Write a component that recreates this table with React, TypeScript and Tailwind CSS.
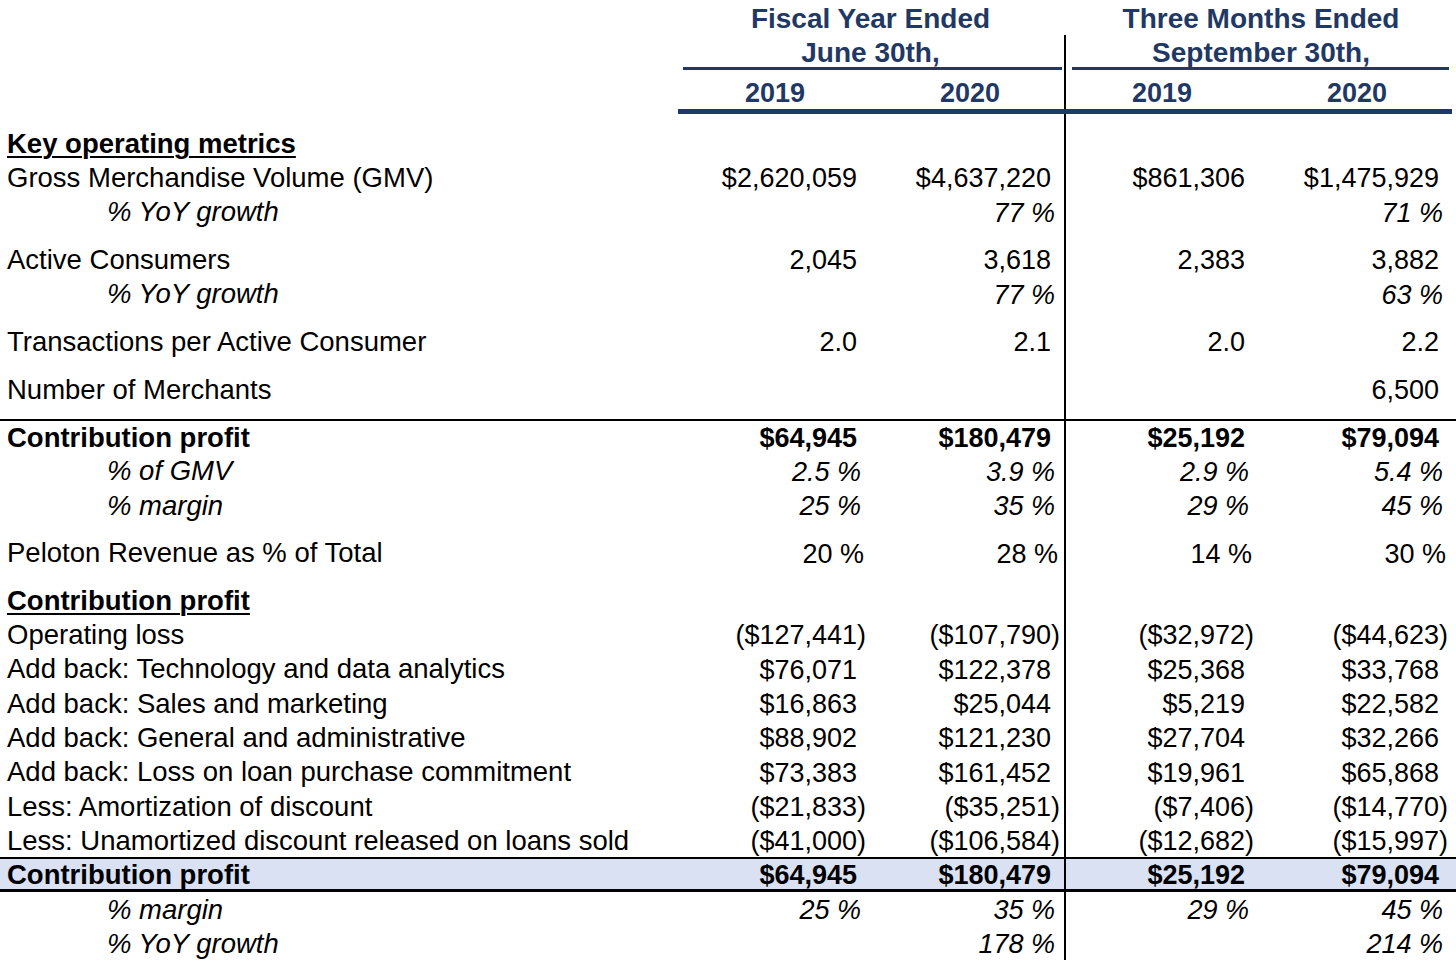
import React from "react";

type RowDef = {
  label: string;
  vals?: string[];
  kind?: "plain" | "italic" | "boldU" | "bold" | "hl";
  topLine?: boolean;
  spacerAfter?: boolean;
};

const rows: RowDef[] = [
  { label: "Key operating metrics", kind: "boldU" },
  { label: "Gross Merchandise Volume (GMV)", vals: ["$2,620,059", "$4,637,220", "$861,306", "$1,475,929"] },
  { label: "% YoY growth", kind: "italic", vals: ["", "77 %", "", "71 %"], spacerAfter: true },
  { label: "Active Consumers", vals: ["2,045", "3,618", "2,383", "3,882"] },
  { label: "% YoY growth", kind: "italic", vals: ["", "77 %", "", "63 %"], spacerAfter: true },
  { label: "Transactions per Active Consumer", vals: ["2.0", "2.1", "2.0", "2.2"], spacerAfter: true },
  { label: "Number of Merchants", vals: ["", "", "", "6,500"], spacerAfter: true },
  { label: "Contribution profit", kind: "bold", topLine: true, vals: ["$64,945", "$180,479", "$25,192", "$79,094"] },
  { label: "% of GMV", kind: "italic", vals: ["2.5 %", "3.9 %", "2.9 %", "5.4 %"] },
  { label: "% margin", kind: "italic", vals: ["25 %", "35 %", "29 %", "45 %"], spacerAfter: true },
  { label: "Peloton Revenue as % of Total", vals: ["20 %", "28 %", "14 %", "30 %"], spacerAfter: true },
  { label: "Contribution profit", kind: "boldU" },
  { label: "Operating loss", vals: ["($127,441)", "($107,790)", "($32,972)", "($44,623)"] },
  { label: "Add back: Technology and data analytics", vals: ["$76,071", "$122,378", "$25,368", "$33,768"] },
  { label: "Add back: Sales and marketing", vals: ["$16,863", "$25,044", "$5,219", "$22,582"] },
  { label: "Add back: General and administrative", vals: ["$88,902", "$121,230", "$27,704", "$32,266"] },
  { label: "Add back: Loss on loan purchase commitment", vals: ["$73,383", "$161,452", "$19,961", "$65,868"] },
  { label: "Less: Amortization of discount", vals: ["($21,833)", "($35,251)", "($7,406)", "($14,770)"] },
  { label: "Less: Unamortized discount released on loans sold", vals: ["($41,000)", "($106,584)", "($12,682)", "($15,997)"] },
  { label: "Contribution profit", kind: "hl", vals: ["$64,945", "$180,479", "$25,192", "$79,094"] },
  { label: "% margin", kind: "italic", vals: ["25 %", "35 %", "29 %", "45 %"] },
  { label: "% YoY growth", kind: "italic", vals: ["", "178 %", "", "214 %"] },
];

function Val({ v, italic, bold }: { v: string; italic: boolean; bold: boolean }) {
  if (!v) return null;
  const isParen = v.startsWith("(");
  const isPct = v.endsWith("%");
  let pad = "pr-[9px]";
  if (isParen) pad = "pr-0";
  else if (isPct && italic) pad = "pr-[5px]";
  else if (isPct) pad = "pr-[2px]";
  return (
    <span className={`${pad} ${italic ? "italic" : ""} ${bold ? "font-bold" : ""} whitespace-nowrap`}>{v}</span>
  );
}

function Row({ r }: { r: RowDef }) {
  const kind = r.kind ?? "plain";
  const italic = kind === "italic";
  const bold = kind === "bold" || kind === "hl" || kind === "boldU";
  const vals = r.vals ?? ["", "", "", ""];
  let rowCls = "flex h-[34.3px]";
  if (r.topLine) rowCls += " border-t-2 border-black";
  if (kind === "hl") rowCls += " border-t-2 border-b-[3px] border-black bg-[#d9e1f2]";
  let labelCls = "w-[673px] flex items-center whitespace-nowrap text-[27.5px] pt-[1px]";
  if (italic) labelCls += " pl-[107px] italic";
  else labelCls += " pl-[7px]";
  if (bold) labelCls += " font-bold";
  if (kind === "boldU") labelCls += " underline decoration-2 underline-offset-[3px]";
  return (
    <div className={rowCls}>
      <div className={labelCls}>{r.label}</div>
      <div className="w-[195px] pr-[2px] pt-[3px] flex items-center justify-end">
        <Val v={vals[0]} italic={italic} bold={bold} />
      </div>
      <div className="w-[196px] pr-[4px] pt-[3px] flex items-center justify-end">
        <Val v={vals[1]} italic={italic} bold={bold} />
      </div>
      <div className="w-[192px] border-l-2 border-black pr-[2px] pt-[3px] flex items-center justify-end">
        <Val v={vals[2]} italic={italic} bold={bold} />
      </div>
      <div className="w-[194px] pr-[2px] pt-[3px] flex items-center justify-end">
        <Val v={vals[3]} italic={italic} bold={bold} />
      </div>
      <div className="flex-1" />
    </div>
  );
}

function Spacer({ h }: { h: string }) {
  return (
    <div className={`flex ${h}`}>
      <div className="w-[1064px]" />
      <div className="w-[2px] bg-black" />
    </div>
  );
}

export default function App() {
  return (
    <div className="w-[1456px] h-[962px] overflow-hidden bg-white text-black font-['Liberation_Sans',Arial,sans-serif] text-[27px] leading-[1.15]">
      {/* Header row A */}
      <div className="flex h-[35px] text-[#1f3864] font-bold text-[28px]">
        <div className="w-[673px]" />
        <div className="w-[391px] flex items-center justify-center pl-[4px] pt-[4px]">Fiscal Year Ended</div>
        <div className="w-[386px] flex items-center justify-center pl-[8px] pt-[4px]">Three Months Ended</div>
      </div>
      {/* Header row B */}
      <div className="flex h-[32px] text-[#1f3864] font-bold text-[28px]">
        <div className="w-[673px]" />
        <div className="w-[391px] flex items-start justify-center pl-[4px] pt-[2px]">June 30th,</div>
        <div className="w-[386px] border-l-2 border-black flex items-start justify-center pl-[6px] pt-[2px]">September 30th,</div>
      </div>
      {/* group lines */}
      <div className="flex h-[3px]">
        <div className="w-[683px]" />
        <div className="w-[379px] bg-[#1f3864]" />
        <div className="w-[2px]" />
        <div className="w-[2px] bg-black" />
        <div className="w-[6px]" />
        <div className="w-[377px] bg-[#1f3864]" />
      </div>
      {/* Years */}
      <div className="flex h-[39px] text-[#1f3864] font-bold">
        <div className="w-[673px]" />
        <div className="w-[195px] flex items-center justify-center pl-[9px] pt-[8px]">2019</div>
        <div className="w-[196px] flex items-center justify-center pl-[8px] pt-[8px]">2020</div>
        <div className="w-[192px] border-l-2 border-black flex items-center justify-center pl-[2px] pt-[8px]">2019</div>
        <div className="w-[194px] flex items-center justify-center pl-[8px] pt-[8px]">2020</div>
      </div>
      {/* thick line */}
      <div className="flex h-[5px]">
        <div className="w-[678px]" />
        <div className="w-[774px] bg-[#1f3864]" />
      </div>
      <Spacer h="h-[12px]" />
      {rows.map((r, i) => (
        <React.Fragment key={i}>
          <Row r={r} />
          {r.spacerAfter ? <Spacer h="h-[13.3px]" /> : null}
        </React.Fragment>
      ))}
    </div>
  );
}
